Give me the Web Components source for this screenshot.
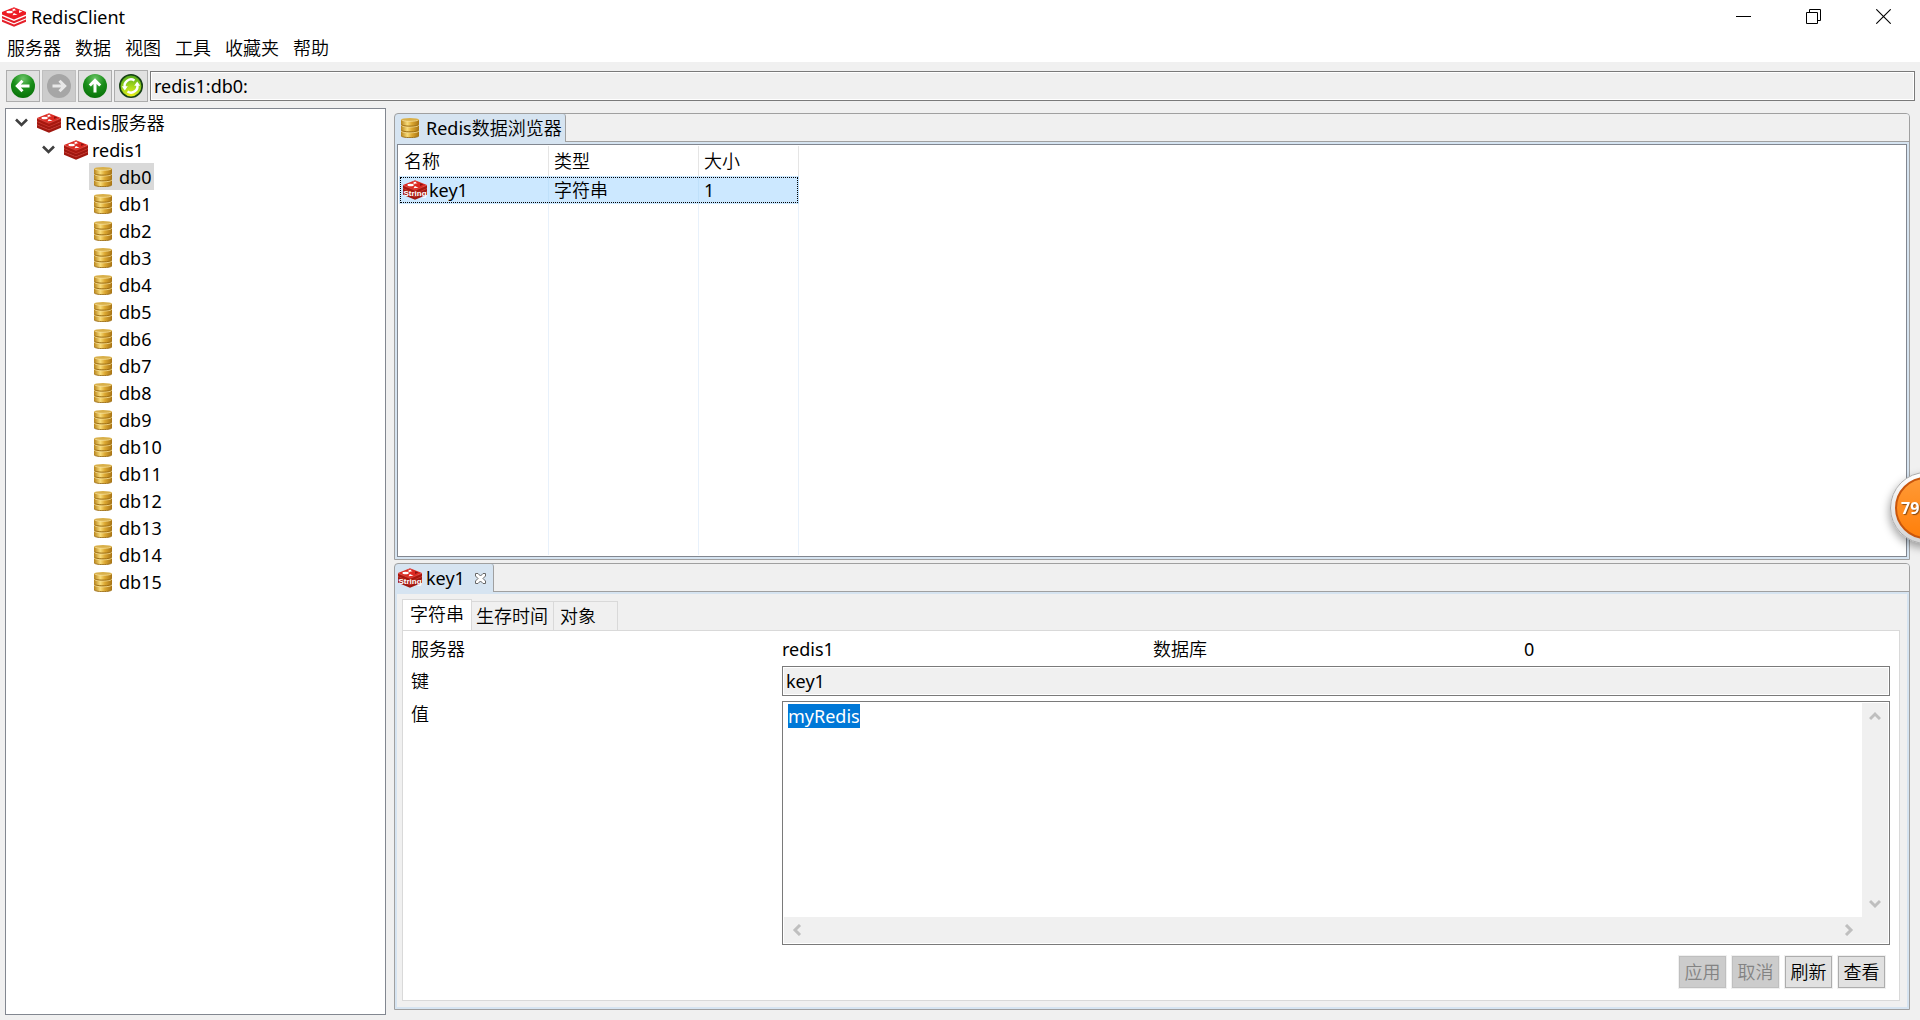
<!DOCTYPE html>
<html lang="zh-CN">
<head>
<meta charset="utf-8">
<title>RedisClient</title>
<style>
  html, body { height: 100%; margin: 0; }
  body {
    overflow: hidden; background: #f0f0f0; color: #000;
    font: 400 18px/24px "Noto Sans", "Noto Sans CJK SC DemiLight", "Noto Sans CJK SC", sans-serif;
  }
</style>
</head>
<body>
<redis-app></redis-app>

<script>
const define = (name, html, setup) => customElements.define(name, class extends HTMLElement {
  constructor() {
    super();
    this.attachShadow({ mode: 'open' }).innerHTML = html;
  }
  connectedCallback() { if (setup) setup.call(this, this.shadowRoot); }
});

/* ---------- icons ---------- */
const layer = (y, fill, side, line) => `
  <path d="M0 ${y}v3.200l12 5 12-5v-3.200l-12 5z" fill="${side}"/>
  <path d="M0 ${y}l12-4.700 12 4.700-12 5z" fill="${fill}"/>
  <path d="M0 ${y + .3}l12 5 12-5" fill="none" stroke="${line}" stroke-width=".6"/>`;
const marks = `
  <path d="M10.500 1.600l1.300.4 1.600-.5-.5 1.100 1.700.6-2.200.2-.7 1-.5-1-2-.2 1.600-.5z" fill="#fff"/>
  <ellipse cx="7.600" cy="5" rx="3.200" ry="1.300" fill="#fff"/>
  <path d="M10.500 8.300l1.400-2.300 3.600 1.700z" fill="#fff"/>
  <path d="M17 3.200l3.400 1.300-3.400 1.400z" fill="#8c1410"/>`;
const cube = layer(11.6, '#c6302b', '#a01810', '#d8463e') + layer(8.3, '#d52b24', '#a01810', '#d8463e') + layer(5, '#dc2a22', '#a8180f', '#e55b52') + marks;
const disc = (y) => `
  <path d="M0 ${y}v4.400c0 1.200 4 2 9 2s9-.8 9-2v-4.400z" fill="url(#gold)"/>
  <path d="M0 ${y + 4.4}c0 1.200 4 2 9 2s9-.8 9-2" fill="none" stroke="#9a6a10" stroke-width=".9"/>
  <ellipse cx="9" cy="${y}" rx="9" ry="1.600" fill="#d9b04a"/>
  <path d="M.3 ${y}c1 1 4 1.600 8.700 1.600s7.700-.6 8.700-1.600" fill="none" stroke="#f6e09a" stroke-width=".8"/>`;
const arrow = (rot) => `<g transform="rotate(${rot} 12 12)"><path d="M18.500 12H7M11.500 6.800L6.300 12l5.200 5.200" fill="none" stroke="#fff" stroke-width="3"/></g>`;
const green = `<defs><radialGradient id="g" cx=".5" cy=".2" r=".8"><stop offset="0" stop-color="#6cc568"/><stop offset=".5" stop-color="#1b8f1b"/><stop offset="1" stop-color="#087208"/></radialGradient></defs><circle cx="12" cy="12" r="12" fill="url(#g)"/>`;
const ICONS = {
  logo: [24, 20, `
    <path d="M0 12.600l12 5 12-5v2.200l-12 5-12-5z M0 9l12 5 12-5v2.200l-12 5-12-5z" fill="#e5202a"/>
    <path d="M0 5L12 .2 24 5v2.500l-12 5-12-5z" fill="#ed1c24"/>` + marks.replace('#8c1410', '#fff')],
  cube: [24, 20, cube],
  string: [24, 20, cube + `<text x="12" y="15.500" text-anchor="middle" font-family="Liberation Sans, sans-serif" font-weight="700" font-size="8" fill="#fff">String</text>`],
  db: [18, 20, `<defs><linearGradient id="gold"><stop offset="0" stop-color="#b8841c"/><stop offset=".35" stop-color="#f8dc7a"/><stop offset=".6" stop-color="#dca832"/><stop offset="1" stop-color="#a87414"/></linearGradient></defs>` + disc(13.2) + disc(7.4) + disc(1.7)],
  back: [24, 24, green + arrow(0)],
  up: [24, 24, green + arrow(90)],
  forward: [24, 24, '<circle cx="12" cy="12" r="12" fill="#a6a6a6"/><g opacity=".75">' + arrow(180) + '</g>'],
  refresh: [24, 24, `<defs><radialGradient id="r" cx=".5" cy="1" r="1"><stop offset="0" stop-color="#f4f41a"/><stop offset=".5" stop-color="#a5d81c"/><stop offset="1" stop-color="#4fa81c"/></radialGradient></defs>
    <circle cx="12" cy="12" r="11.200" fill="url(#r)" stroke="#174217" stroke-width="1.600"/>
    <path d="M5.800 13.500a6.400 6.400 0 0 1 9.700-7M18.200 10.500a6.400 6.400 0 0 1-9.700 7" fill="none" stroke="#fff" stroke-width="2.400"/>
    <path d="M2.800 12.300h6l-3 4.200zM21.200 11.700h-6l3-4.200z" fill="#fff"/>`],
  chevron: [13, 9, '<path d="M1 1.500l5.500 5.500L12 1.500" fill="none" stroke="#404040" stroke-width="2.600"/>'],
  min: [15, 15, '<path d="M0 7.500h15" stroke="#000"/>'],
  restore: [15, 15, '<path d="M.5 3.500h11v11H.5zM3.500 3V.5h11v11H12" fill="none" stroke="#000"/>'],
  close: [15, 15, '<path d="M.3.300l14.400 14.400M14.700.300L.3 14.700" stroke="#000" stroke-width="1.100"/>'],
  tabclose: [11, 11, '<path d="M.5.500h2.500l2.500 2.500L8 .5h2.500V3L8 5.500l2.500 2.500v2.500H8L5.500 8 3 10.500H.5V8L3 5.500.5 3z" fill="#fff" stroke="#666"/>'],
  sup: [12, 10, '<path d="M1 8l5-5 5 5" fill="none" stroke="#bfbfbf" stroke-width="3"/>'],
  sdown: [12, 10, '<path d="M1 2l5 5 5-5" fill="none" stroke="#bfbfbf" stroke-width="3"/>'],
  sleft: [10, 12, '<path d="M8 1L3 6l5 5" fill="none" stroke="#bfbfbf" stroke-width="3"/>'],
  sright: [10, 12, '<path d="M2 1l5 5-5 5" fill="none" stroke="#bfbfbf" stroke-width="3"/>'],
};
customElements.define('app-icon', class extends HTMLElement {
  static observedAttributes = ['name'];
  constructor() {
    super();
    this.attachShadow({ mode: 'open' });
  }
  attributeChangedCallback(attr, old, name) {
    const [w, h, body] = ICONS[name];
    this.shadowRoot.innerHTML = `
      <style>:host{display:flex;flex:none;justify-content:center;align-items:center}svg{display:block}</style>
      <svg width="${w}" height="${h}" viewBox="0 0 ${w} ${h}" aria-hidden="true">${body}</svg>`;
  }
});

/* ---------- title bar and menu ---------- */
define('title-bar', `
<style>
  :host { display: flex; align-items: center; height: 34px; padding: 0 2px; background: #fff; }
  h1 { flex: 1; margin: 0 0 0 5px; font: inherit; }
  button { display: grid; place-items: center; align-self: flex-start; width: 70px; height: 32px; border: 0; padding: 0; background: none; }
</style>
<app-icon name="logo"></app-icon><h1><slot></slot></h1>
<button aria-label="最小化"><app-icon name="min"></app-icon></button>
<button aria-label="还原"><app-icon name="restore"></app-icon></button>
<button aria-label="关闭"><app-icon name="close"></app-icon></button>`);

define('menu-bar', `
<style>
  :host { display: flex; gap: 14px; height: 28px; padding-left: 7px; background: #fff; }
  button { border: 0; padding: 0; background: none; font: inherit; color: inherit; line-height: 28px; }
</style>
<button>服务器</button><button>数据</button><button>视图</button><button>工具</button><button>收藏夹</button><button>帮助</button>`);

define('tool-bar', `
<style>
  :host { display: flex; gap: 2px; padding: 8px 5px 6px 6px; }
  button { display: flex; align-items: center; justify-content: center; width: 34px; height: 32px;
    padding: 0; border: 1px solid #adadad; background: #e1e1e1; }
  button:disabled { background: #ccc; border-color: #bfbfbf; }
  input { flex: 1; min-width: 0; height: 30px; margin-top: 1px; box-sizing: border-box; padding: 0 3px;
    border: 1px solid #7a7a7a; box-shadow: inset 0 0 0 1px #fff; background: #f0f0f0; font: inherit; color: inherit; }
</style>
<button aria-label="后退"><app-icon name="back"></app-icon></button>
<button aria-label="前进" disabled><app-icon name="forward"></app-icon></button>
<button aria-label="向上"><app-icon name="up"></app-icon></button>
<button aria-label="刷新"><app-icon name="refresh"></app-icon></button>
<input aria-label="路径" value="redis1:db0:" readonly>`);

/* ---------- tree ---------- */
define('tree-item', `
<style>
  :host { display: flex; align-items: center; height: 27px; padding-left: calc(9px + 27px * var(--level)); }
  .twist { width: 13px; margin-right: 7px; }
  :host(:not([open])) .twist { visibility: hidden; }
  .item { display: flex; align-items: center; gap: 4px; height: 27px; padding: 0 3px 0 2px; }
  .pic { width: 24px; }
  :host([selected]) .item { background: #d9d9d9; }
</style>
<app-icon class="twist" name="chevron"></app-icon>
<span class="item"><app-icon class="pic" name="db"></app-icon><slot></slot></span>`, function (root) {
  this.style.setProperty('--level', this.getAttribute('level'));
  root.querySelector('.pic').setAttribute('name', this.getAttribute('icon'));
});

define('server-tree', `
<style>
  :host { display: block; box-sizing: border-box; border: 1px solid #828790; background: #fff; overflow: hidden; }
</style>
<tree-item level="0" icon="cube" open>Redis服务器</tree-item>
<tree-item level="1" icon="cube" open>redis1</tree-item>
<div></div>`, function (root) {
  root.querySelector('div').innerHTML = Array.from({ length: 16 }, (_, i) =>
    `<tree-item level="2" icon="db"${i ? '' : ' selected'}>db${i}</tree-item>`).join('');
});

/* ---------- folder with one tab ---------- */
define('tab-folder', `
<style>
  :host { display: flex; flex-direction: column; min-height: 0; box-sizing: border-box;
    border: 1px solid #a0a0a0; border-radius: 4px 4px 0 0; background: #d6e4f1; overflow: hidden; }
  header { display: flex; height: 28px; }
  .tab { display: flex; align-items: center; gap: 4px; padding: 0 3px; border-right: 1px solid #a0a0a0; border-radius: 0 3px 0 0; }
  .pic { width: 24px; }
  .x { border: 0; padding: 0; margin: 0 4px 0 6px; background: none; }
  :host(:not([closable])) .x { display: none; }
  .rest { flex: 1; border-bottom: 1px solid #a0a0a0; background: #f0f0f0; }
  main { display: flex; flex: 1; min-height: 0; padding: 2px; }
  ::slotted(*) { flex: 1; min-width: 0; }
</style>
<header>
  <div class="tab"><app-icon class="pic" name="db"></app-icon><span class="name"></span>
    <button class="x" aria-label="关闭"><app-icon name="tabclose"></app-icon></button></div>
  <div class="rest"></div>
</header>
<main><slot></slot></main>`, function (root) {
  root.querySelector('.pic').setAttribute('name', this.getAttribute('icon'));
  root.querySelector('.name').textContent = this.getAttribute('label');
});

/* ---------- key list ---------- */
define('key-table', `
<style>
  :host { display: block; box-sizing: border-box; padding: 1px; border: 1px solid #828790; background: #fff; }
  table { width: 400px; height: 100%; table-layout: fixed; border-collapse: separate; border-spacing: 0; }
  col.wide { width: 150px; }
  th, td { padding: 0 5px; border-right: 1px solid #e8f1fb; text-align: left; font-weight: inherit; box-sizing: border-box; }
  th { height: 30px; border-color: #e5e5e5; }
  .sel td { height: 28px; background: #cce8ff; border-color: #bfe0fa; }
  .sel { outline: 1px dotted #000; outline-offset: -2px; }
  .key { display: flex; align-items: center; gap: 2px; margin-left: -1px; }
</style>
<table>
  <colgroup><col class="wide"><col class="wide"><col></colgroup>
  <thead><tr><th>名称</th><th>类型</th><th>大小</th></tr></thead>
  <tbody>
    <tr class="sel"><td><span class="key"><app-icon name="string"></app-icon>key1</span></td><td>字符串</td><td>1</td></tr>
    <tr><td></td><td></td><td></td></tr>
  </tbody>
</table>`);

/* ---------- value editor ---------- */
define('scroll-area', `
<style>
  :host { display: grid; grid-template: minmax(0, 1fr) 26px / minmax(0, 1fr) 26px; box-sizing: border-box;
    padding: 1px; border: 1px solid #7a7a7a; background: #fff; }
  .bar { display: flex; justify-content: space-between; background: #f0f0f0; }
  .v { flex-direction: column; }
  .bar.h { grid-column: 1 / -1; padding-right: 26px; }
  button { display: grid; place-items: center; width: 26px; height: 26px; border: 0; padding: 0; background: none; }
</style>
<slot></slot>
<div class="bar v"><button aria-label="向上滚动"><app-icon name="sup"></app-icon></button><button aria-label="向下滚动"><app-icon name="sdown"></app-icon></button></div>
<div class="bar h"><button aria-label="向左滚动"><app-icon name="sleft"></app-icon></button><button aria-label="向右滚动"><app-icon name="sright"></app-icon></button></div>`);

define('value-editor', `
<style>
  :host { display: flex; flex-direction: column; box-sizing: border-box; padding: 5px 7px 6px 5px; background: #f0f0f0; }
  nav { display: flex; align-items: flex-end; }
  nav button { height: 29px; padding: 0 5px 0 4px; border: 1px solid #d9d9d9; border-width: 1px 1px 0 0;
    background: #f0f0f0; font: inherit; color: inherit; text-align: left; }
  nav button.on { height: 32px; margin-bottom: -1px; padding: 0 7px 4px; border-left-width: 1px; background: #fff; }
  nav button:last-child { padding: 0 21px 0 6px; }
  .panel { display: grid; flex: 1; min-height: 0; gap: 5px; padding: 5px 9px 11px 8px;
    grid-template: 25px 30px minmax(0, 1fr) 39px / repeat(4, minmax(0, 1fr));
    border: 1px solid #d9d9d9; background: #fff; }
  .wide { grid-column: span 3; }
  .panel > span, label { padding-top: 1px; }
  label[for=key] { padding-top: 3px; }
  input { box-sizing: border-box; padding: 0 3px; border: 1px solid #7a7a7a; box-shadow: inset 0 0 0 1px #fff;
    background: #f0f0f0; font: inherit; color: inherit; min-width: 0; }
  textarea { box-sizing: border-box; border: 0; outline: 0; resize: none; padding: 1px 4px; background: #fff;
    font: inherit; color: inherit; overflow: hidden; white-space: pre; }
  textarea::selection { background: #0078d7; color: #fff; }
  footer { grid-column: 1 / -1; display: flex; justify-content: flex-end; gap: 6px; padding: 6px 5px 1px 0; }
  footer button { width: 47px; height: 32px; padding: 0; border: 1px solid #adadad; box-shadow: 0 0 0 1px #f0f0f0;
    background: #e1e1e1; font: inherit; color: inherit; }
  footer button:disabled { background: #ccc; border-color: #bfbfbf; color: #838383; }
</style>
<nav><button class="on">字符串</button><button>生存时间</button><button>对象</button></nav>
<div class="panel">
  <span>服务器</span><span>redis1</span><span>数据库</span><span>0</span>
  <label for="key">键</label><input id="key" class="wide" value="key1" readonly>
  <label for="val">值</label><scroll-area class="wide"><textarea id="val" spellcheck="false">myRedis</textarea></scroll-area>
  <footer><button disabled>应用</button><button disabled>取消</button><button>刷新</button><button>查看</button></footer>
</div>`, function (root) {
  const box = root.querySelector('textarea');
  box.focus();
  box.setSelectionRange(0, box.value.length);
});

/* ---------- floating ball ---------- */
define('float-ball', `
<style>
  :host { position: fixed; right: -42px; top: calc(50% - 38px); width: 72px; height: 72px; box-sizing: border-box;
    padding: 4px; border-radius: 50%; border: 1px solid #a9a9a9; background: linear-gradient(#fff, #d4d4d4);
    box-shadow: -1px 4px 9px rgba(0, 0, 0, .35); }
  div { display: flex; align-items: center; height: 100%; box-sizing: border-box; padding-left: 4px; border-radius: 50%;
    border: 2px solid #c9560c; background: linear-gradient(#ff9a36, #ff7f0a);
    color: #fff; font: 700 16px/20px "Open Sans", sans-serif; text-shadow: 1px 1px 1px #8a4a10; }
</style>
<div><slot></slot></div>`);

/* ---------- application ---------- */
define('redis-app', `
<style>
  :host { display: flex; flex-direction: column; height: 100vh; }
  .body { flex: 1; min-height: 0; display: grid; grid-template-columns: 381px minmax(0, 1fr); gap: 3px; padding: 0 5px 5px; }
  .side { display: grid; grid-template-rows: repeat(2, minmax(0, 1fr)); gap: 3px; padding: 5px; min-height: 0; }
</style>
<title-bar>RedisClient</title-bar>
<menu-bar></menu-bar>
<tool-bar></tool-bar>
<div class="body">
  <server-tree></server-tree>
  <div class="side">
    <tab-folder icon="db" label="Redis数据浏览器"><key-table></key-table></tab-folder>
    <tab-folder icon="string" label="key1" closable><value-editor></value-editor></tab-folder>
  </div>
</div>
<float-ball>79</float-ball>`);
</script>
</body>
</html>
